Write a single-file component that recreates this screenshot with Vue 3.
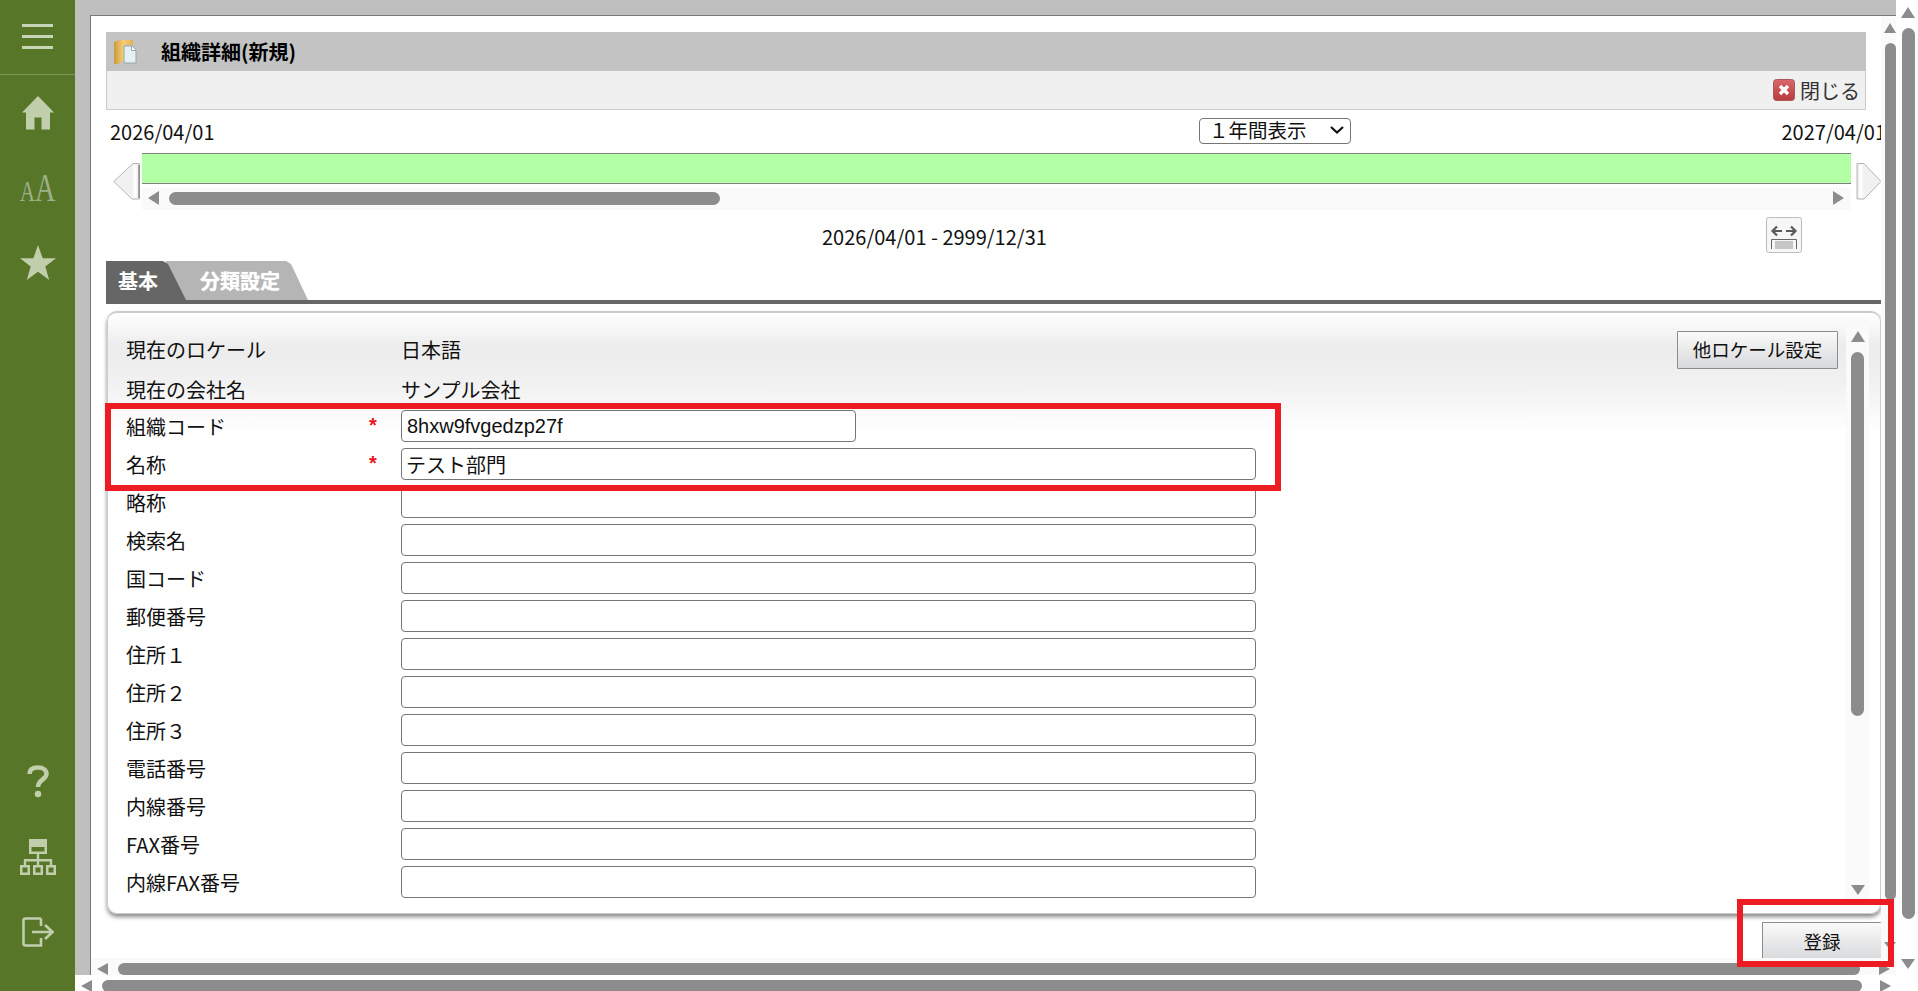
<script setup>
const rows = [
  { label: '組織コード', required: true, value: '8hxw9fvgedzp27f', short: true },
  { label: '名称', required: true, value: 'テスト部門' },
  { label: '略称' },
  { label: '検索名' },
  { label: '国コード' },
  { label: '郵便番号' },
  { label: '住所１' },
  { label: '住所２' },
  { label: '住所３' },
  { label: '電話番号' },
  { label: '内線番号' },
  { label: 'FAX番号' },
  { label: '内線FAX番号' }
]
</script>

<template>
  <div class="page">
    <aside class="sidebar">
      <div class="burger"><span></span><span></span><span></span></div>
      <div class="slot">
        <svg width="32" height="34" viewBox="0 0 32 34"><path d="M16 0 32 16.500H28V33.500H19.500V21.500H12.500V33.500H4V16.500H0Z" /></svg>
      </div>
      <div class="slot aa"><span class="aa-inner"><span class="small-a">A</span><span class="big-a">A</span></span></div>
      <div class="slot">
        <svg width="36" height="35" viewBox="0 0 36 35"><path d="M18 0 22.700 13.300H36L25.300 21.400 29.200 35 18 26.800 6.800 35 10.700 21.400 0 13.300H13.300Z" /></svg>
      </div>
      <div class="spacer"></div>
      <div class="slot">
        <svg width="22" height="33" viewBox="0 0 22 33"><path d="M2.500 9C2.500 4.500 6 2.500 11 2.500 16 2.500 19.500 5 19.500 9 19.500 14.500 11 14.500 11 22" fill="none" stroke-width="4.500" /><circle cx="11" cy="29" r="3.200" /></svg>
      </div>
      <div class="slot">
        <svg width="36" height="36" viewBox="0 0 36 36"><path fill-rule="evenodd" d="M9 0H27V15H19.200V20H32.200V26H36V36H26V26H29.800V22.500H19.200V26H23V36H13V26H16.800V22.500H6.200V26H10V36H0V26H3.800V20H16.800V15H9ZM2.500 28.500V33.500H7.500V28.500ZM15.500 28.500V33.500H20.500V28.500ZM28.500 28.500V33.500H33.500V28.500ZM11.500 8V12.500H24.500V8Z" /></svg>
      </div>
      <div class="slot">
        <svg width="32" height="30" viewBox="0 0 32 30"><path d="M19 1.500H3.500Q1.500 1.500 1.500 3.500V26.500Q1.500 28.500 3.500 28.500H19V21M19 9V1.500M10 15H30M23 8 30.500 15 23 22" fill="none" stroke-width="2.600" /></svg>
      </div>
    </aside>

    <div class="workspace">
      <div class="work-top">
        <div class="desk">
          <div class="window">
            <div class="window-body">
              <main class="content">
                <header class="title-bar">
                  <svg class="folder" width="23" height="24" viewBox="0 0 23 24">
                    <defs>
                      <linearGradient id="fold" x1="0" y1="0" x2="1" y2="0">
                        <stop offset="0" stop-color="#c99a3c" />
                        <stop offset=".5" stop-color="#f6cf78" />
                        <stop offset="1" stop-color="#e5b04e" />
                      </linearGradient>
                    </defs>
                    <path d="M0 2 5 0H19V5H10V21L4 24H0Z" fill="url(#fold)" />
                    <path d="M10 6H18L22 10V23H10Z" fill="#e6eff1" stroke="#93a8ab" />
                    <path d="M17.500 6V10.500H22" fill="#fff" stroke="#93a8ab" />
                  </svg>
                  <h1>組織詳細(新規)</h1>
                </header>
                <div class="tool-bar">
                  <svg width="22" height="22" viewBox="0 0 22 22">
                    <defs>
                      <linearGradient id="close" x1="0" y1="0" x2="0" y2="1">
                        <stop offset="0" stop-color="#d9686c" />
                        <stop offset="1" stop-color="#b83a3e" />
                      </linearGradient>
                    </defs>
                    <rect x=".5" y=".5" width="21" height="21" rx="3" fill="url(#close)" stroke="#a85a5a" />
                    <path d="M7 7 15 15M15 7 7 15" stroke="#fff" stroke-width="3.400" />
                  </svg>
                  <span>閉じる</span>
                </div>

                <div class="date-row">
                  <span>2026/04/01</span>
                  <div class="period" role="combobox">
                    <span>１年間表示</span>
                    <svg width="14" height="8" viewBox="0 0 14 8"><path d="M1 1 7 6.500 13 1" fill="none" stroke="#111" stroke-width="2.200" /></svg>
                  </div>
                  <span>2027/04/01</span>
                </div>

                <div class="timeline">
                  <svg class="big-arrow" width="28" height="37" viewBox="0 0 28 37"><path d="M26.500 .5V36H19L.8 18.500 20 .5Z" fill="#f1f1f1" stroke="#b4b4b4" /><path d="M22 2V35" stroke="#fff" stroke-width="3" /><path d="M26 2V35" stroke="#888" stroke-width="1.500" /></svg>
                  <div class="track">
                    <div class="bar"></div>
                    <div class="hbar tl-scroll">
                      <i class="tri left"></i>
                      <b class="thumb tl-thumb"></b>
                      <i class="tri right"></i>
                    </div>
                  </div>
                  <svg class="big-arrow" width="26" height="37" viewBox="0 0 26 37"><path d="M1 .5V36H8L25 18.500 8 .5Z" fill="#f1f1f1" stroke="#b4b4b4" /><path d="M5 2V35" stroke="#fff" stroke-width="3" /></svg>
                </div>

                <div class="range-row">
                  <span>2026/04/01 - 2999/12/31</span>
                  <svg width="36" height="36" viewBox="0 0 36 36">
                    <rect x=".5" y=".5" width="35" height="35" rx="2" fill="#f6f6f6" stroke="#bdbdbd" />
                    <path d="M6 14H16M11 9.500 6.500 14 11 18.500M20 14H30M25 9.500 29.500 14 25 18.500" fill="none" stroke="#5a5a5a" stroke-width="2.200" />
                    <rect x="9" y="24" width="18" height="8" fill="#c6c6c6" />
                    <path d="M5.500 32V22.500H30.500V32" fill="none" stroke="#666" />
                  </svg>
                </div>

                <nav class="tabs">
                  <span class="tab second">分類設定</span>
                  <span class="tab first">基本</span>
                </nav>

                <section class="panel">
                  <div class="form">
                    <div class="info-row first-info">
                      <span class="label">現在のロケール</span>
                      <span class="info-value">日本語</span>
                      <button class="btn locale">他ロケール設定</button>
                    </div>
                    <div class="info-row second-info">
                      <span class="label">現在の会社名</span>
                      <span class="info-value">サンプル会社</span>
                    </div>
                    <div v-for="row in rows" :key="row.label" class="field">
                      <span class="label">{{ row.label }}</span>
                      <span class="star">{{ row.required ? '*' : '' }}</span>
                      <input class="input" :class="{ short: row.short, latin: row.short }" :value="row.value" readonly />
                    </div>
                  </div>
                  <div class="vbar panel-scroll">
                    <i class="tri up"></i>
                    <b class="thumb panel-thumb"></b>
                    <i class="tri down"></i>
                  </div>
                </section>

                <div class="submit-row"><button class="btn submit">登録</button></div>
              </main>
              <div class="vbar window-scroll">
                <i class="tri up"></i>
                <b class="thumb"></b>
                <i class="tri down"></i>
              </div>
            </div>
            <div class="hbar window-hscroll">
              <i class="tri left"></i>
              <b class="thumb"></b>
              <i class="tri right"></i>
            </div>
          </div>
        </div>
        <div class="vbar outer-scroll">
          <i class="tri up"></i>
          <b class="thumb"></b>
          <i class="tri down"></i>
        </div>
      </div>
      <div class="hbar outer-hscroll">
        <i class="tri left"></i>
        <b class="thumb"></b>
        <i class="tri right"></i>
      </div>
    </div>

    <div class="mark mark-fields"></div>
    <div class="mark mark-submit"></div>
  </div>
</template>

<style>
html, body { margin: 0; background: #fff; }
</style>

<style scoped>
.page {
  position: relative;
  display: flex;
  width: 1918px;
  height: 991px;
  overflow: hidden;
  background: #fff;
  color: #111;
  font-family: "Noto Sans CJK JP", "Noto Sans", sans-serif;
  font-size: 20px;
}

/* sidebar */
.sidebar {
  flex: 0 0 75px;
  display: flex;
  flex-direction: column;
  padding-bottom: 22px;
  box-sizing: border-box;
  background: #587628;
}
.burger {
  height: 50px;
  border-bottom: 1px solid #7d9656;
  display: flex;
  flex-direction: column;
  align-items: center;
  gap: 8px;
  padding-top: 24px;
}
.burger span { width: 31px; height: 3px; background: #c8d4b6; }
.slot {
  height: 75px;
  flex: none;
  display: flex;
  align-items: center;
  justify-content: center;
}
.slot svg { fill: #c0ceab; stroke: #c0ceab; stroke-width: 0; }
.slot svg [fill="none"] { fill: none; }
.aa { color: #9db088; font-family: "Liberation Serif", serif; }
.aa-inner {
  display: flex;
  align-items: baseline;
  line-height: 1;
  transform: scaleX(.69);
}
.small-a { font-size: 30px; }
.big-a { font-size: 41px; }
.spacer { flex: 1; }

/* frame */
.workspace { flex: 1; display: flex; flex-direction: column; min-width: 0; }
.work-top { flex: 0 0 975px; display: flex; min-height: 0; }
.desk {
  flex: 1;
  min-width: 0;
  padding: 15px 0 0 15px;
  background: #bfbfbf;
  display: flex;
}
.window {
  flex: 1;
  min-width: 0;
  display: flex;
  flex-direction: column;
  border-top: 1px solid #777;
  border-left: 1px solid #777;
  background: #fff;
}
.window-body { flex: 1; display: flex; min-height: 0; }
.content {
  flex: 1;
  min-width: 0;
  overflow: hidden;
  padding: 16px 0 0 15px;
  display: flex;
  flex-direction: column;
}

/* title */
.title-bar {
  flex: 0 0 39px;
  width: 1760px;
  background: #c3c3c3;
  display: flex;
  align-items: center;
  padding-left: 8px;
  box-sizing: border-box;
}
.title-bar h1 { margin: 0 0 0 24px; font-size: 20px; font-weight: 700; line-height: 1; color: #000; }
.tool-bar {
  flex: 0 0 39px;
  width: 1760px;
  box-sizing: border-box;
  background: #f0f0f0;
  border: 1px solid #ccc;
  border-top: 0;
  display: flex;
  align-items: center;
  justify-content: flex-end;
  gap: 5px;
  padding: 0 5px 0 0;
  font-size: 20px;
  color: #333;
}

/* timeline */
.date-row {
  flex: 0 0 43px;
  margin-right: -5px;
  padding: 0 0 0 4px;
  box-sizing: border-box;
  display: flex;
  align-items: center;
  justify-content: space-between;
  line-height: 1;
}
.period {
  width: 152px;
  height: 26px;
  margin: 0 0 2px 554px;
  padding: 0 6px 1px 9px;
  box-sizing: border-box;
  display: flex;
  align-items: center;
  justify-content: space-between;
  border: 1px solid #767676;
  border-radius: 4px;
  background: #fff;
  color: #111;
  font-size: 19.500px;
}
.timeline { flex: 0 0 57px; display: flex; gap: 1px; padding-left: 7px; align-items: flex-start; }
.big-arrow { flex: none; margin-top: 10px; }
.track { flex: 0 0 1709px; display: flex; flex-direction: column; }
.bar {
  height: 31px;
  box-sizing: border-box;
  background: #b3ffa5;
  border-top: 1px solid #808080;
  border-bottom: 1px solid #808080;
}
.timeline .big-arrow:last-child { margin-left: 4px; }
.range-row {
  flex: 0 0 51px;
  display: flex;
  align-items: center;
  justify-content: space-between;
  padding: 2px 79px 0 716px;
  box-sizing: border-box;
  line-height: 1;
}
.range-row svg { margin-top: -3px; }

/* tabs */
.tabs {
  flex: 0 0 43px;
  box-sizing: border-box;
  display: flex;
  border-bottom: 4px solid #666;
  position: relative;
}
.tab {
  height: 39px;
  display: flex;
  align-items: center;
  font-weight: 700;
  color: #fff;
  box-sizing: border-box;
  padding-left: 12px;
}
.first {
  position: absolute;
  left: 0;
  top: 0;
  width: 80px;
  background: #666;
  clip-path: polygon(0 0, 57px 0, 62px 3px, 80px 100%, 0 100%);
}
.second {
  margin-left: 60px;
  width: 142px;
  padding-left: 34px;
  background: #b5b5b5;
  clip-path: polygon(0 0, 120px 0, 125px 3px, 142px 100%, 0 100%);
  text-shadow: 0 0 1px #fff;
}

/* panel */
.panel {
  flex: 0 0 603px;
  margin: 7px 0 0 1px;
  box-sizing: border-box;
  display: flex;
  border: 1px solid #ccc;
  border-top: 2px solid #ccc;
  border-radius: 10px;
  background: linear-gradient(#fff 0, #ececec 34px, #f1f1f1 70px, #fff 120px);
  box-shadow: 0 3px 4px #8a8a8a;
}
.form { flex: 1; min-width: 0; padding: 17px 8px 0 18px; }
.info-row { display: flex; align-items: center; }
.first-info { height: 40px; }
.second-info { height: 37px; padding-top: 3px; box-sizing: border-box; }
.label { flex: 0 0 275px; line-height: 1; }
.info-value { line-height: 1; flex: 1; }
.field {
  height: 38px;
  display: grid;
  grid-template-columns: 243px 32px 1fr;
  align-items: center;
}
.field .label { padding-top: 2px; }
.star {
  color: #e8141e;
  font: 700 20px/1 "Liberation Sans", sans-serif;
  padding-bottom: 2px;
}
.input {
  width: 855px;
  height: 32px;
  box-sizing: border-box;
  padding: 0 4px;
  border: 1px solid #767676;
  border-radius: 4px;
  background: #fff;
  color: #111;
  font: 20px/1 "Noto Sans CJK JP", sans-serif;
  outline: none;
}
.short { width: 455px; }
.latin { font-family: "Liberation Sans", sans-serif; padding-left: 5px; }

.btn {
  box-sizing: border-box;
  border: 1px solid #8c8c8c;
  border-radius: 1px;
  background: linear-gradient(#fafafa, #d8d9db);
  color: #111;
  font: 18.500px/1 "Noto Sans CJK JP", sans-serif;
  padding: 0;
}
.locale { flex: 0 0 161px; height: 38px; margin-top: -1px; }
.submit-row { flex: 1; display: flex; justify-content: flex-end; padding-top: 8px; }
.submit { width: 119px; height: 37px; border-right: 0; border-bottom: 0; }

/* scrollbars */
.vbar, .hbar { display: flex; flex: none; box-sizing: border-box; }
.vbar { flex-direction: column; align-items: center; }
.hbar { align-items: center; }
.thumb { display: block; background: #8c8c8c; border-radius: 7px; }
.tri { display: block; flex: none; width: 0; height: 0; border: 0 solid transparent; }
.tri.up { border-width: 0 7px 11px; border-bottom-color: #8c8c8c; }
.tri.down { border-width: 10px 7px 0; border-top-color: #8c8c8c; }
.tri.left { border-width: 6px 11px 6px 0; border-right-color: #8c8c8c; }
.tri.right { border-width: 6px 0 6px 11px; border-left-color: #8c8c8c; }

.tl-scroll {
  height: 22px;
  margin-top: 4px;
  background: #fafafa;
  padding: 0 0 2px 6px;
  justify-content: flex-start;
}
.tl-scroll .tri { border-top-width: 7.500px; border-bottom-width: 7.500px; }
.tl-thumb { width: 551px; height: 13px; margin-left: 10px; }
.tl-scroll .right { margin-left: auto; margin-right: 7px; }

.panel-scroll {
  flex: 0 0 23px;
  margin: 12px 11px 8px 0;
  padding-top: 6px;
  background: #fafafa;
}
.panel-thumb { width: 13px; height: 364px; margin-top: 10px; }
.panel-scroll .down { margin-top: auto; margin-bottom: 10px; }

.window-scroll { flex: 0 0 15px; background: #fafafa; padding-top: 7px; align-items: flex-end; }
.window-scroll .thumb { width: 11px; flex: 1; margin-top: 10px; }
.window-scroll .down { margin: 42px 0 8px; border-width: 8px 6px 0; }
.window-scroll .up { border-width: 0 6px 10px; }

.window-hscroll { flex: 0 0 17px; background: #fafafa; padding: 5px 6px 0; }
.window-hscroll .thumb { height: 12px; flex: 1; margin: 0 19px 0 10px; }

.outer-scroll { flex: 0 0 21px; padding: 7px 3px 6px 5px; align-items: center; }
.outer-scroll .thumb { width: 13px; height: 892px; margin-top: 10px; }
.outer-scroll .down { margin-top: 40px; }

.outer-hscroll { flex: 0 0 16px; padding: 5px 27px 0 6px; }
.outer-hscroll .thumb { flex: 1; height: 12px; margin: 0 18px 0 10px; }

/* annotations drawn over the page */
.mark { position: absolute; box-sizing: border-box; border: 6px solid #ed1c24; pointer-events: none; }
.mark-fields { left: 105px; top: 403px; width: 1176px; height: 88px; }
.mark-submit { left: 1737px; top: 899px; width: 157px; height: 68px; }
</style>
